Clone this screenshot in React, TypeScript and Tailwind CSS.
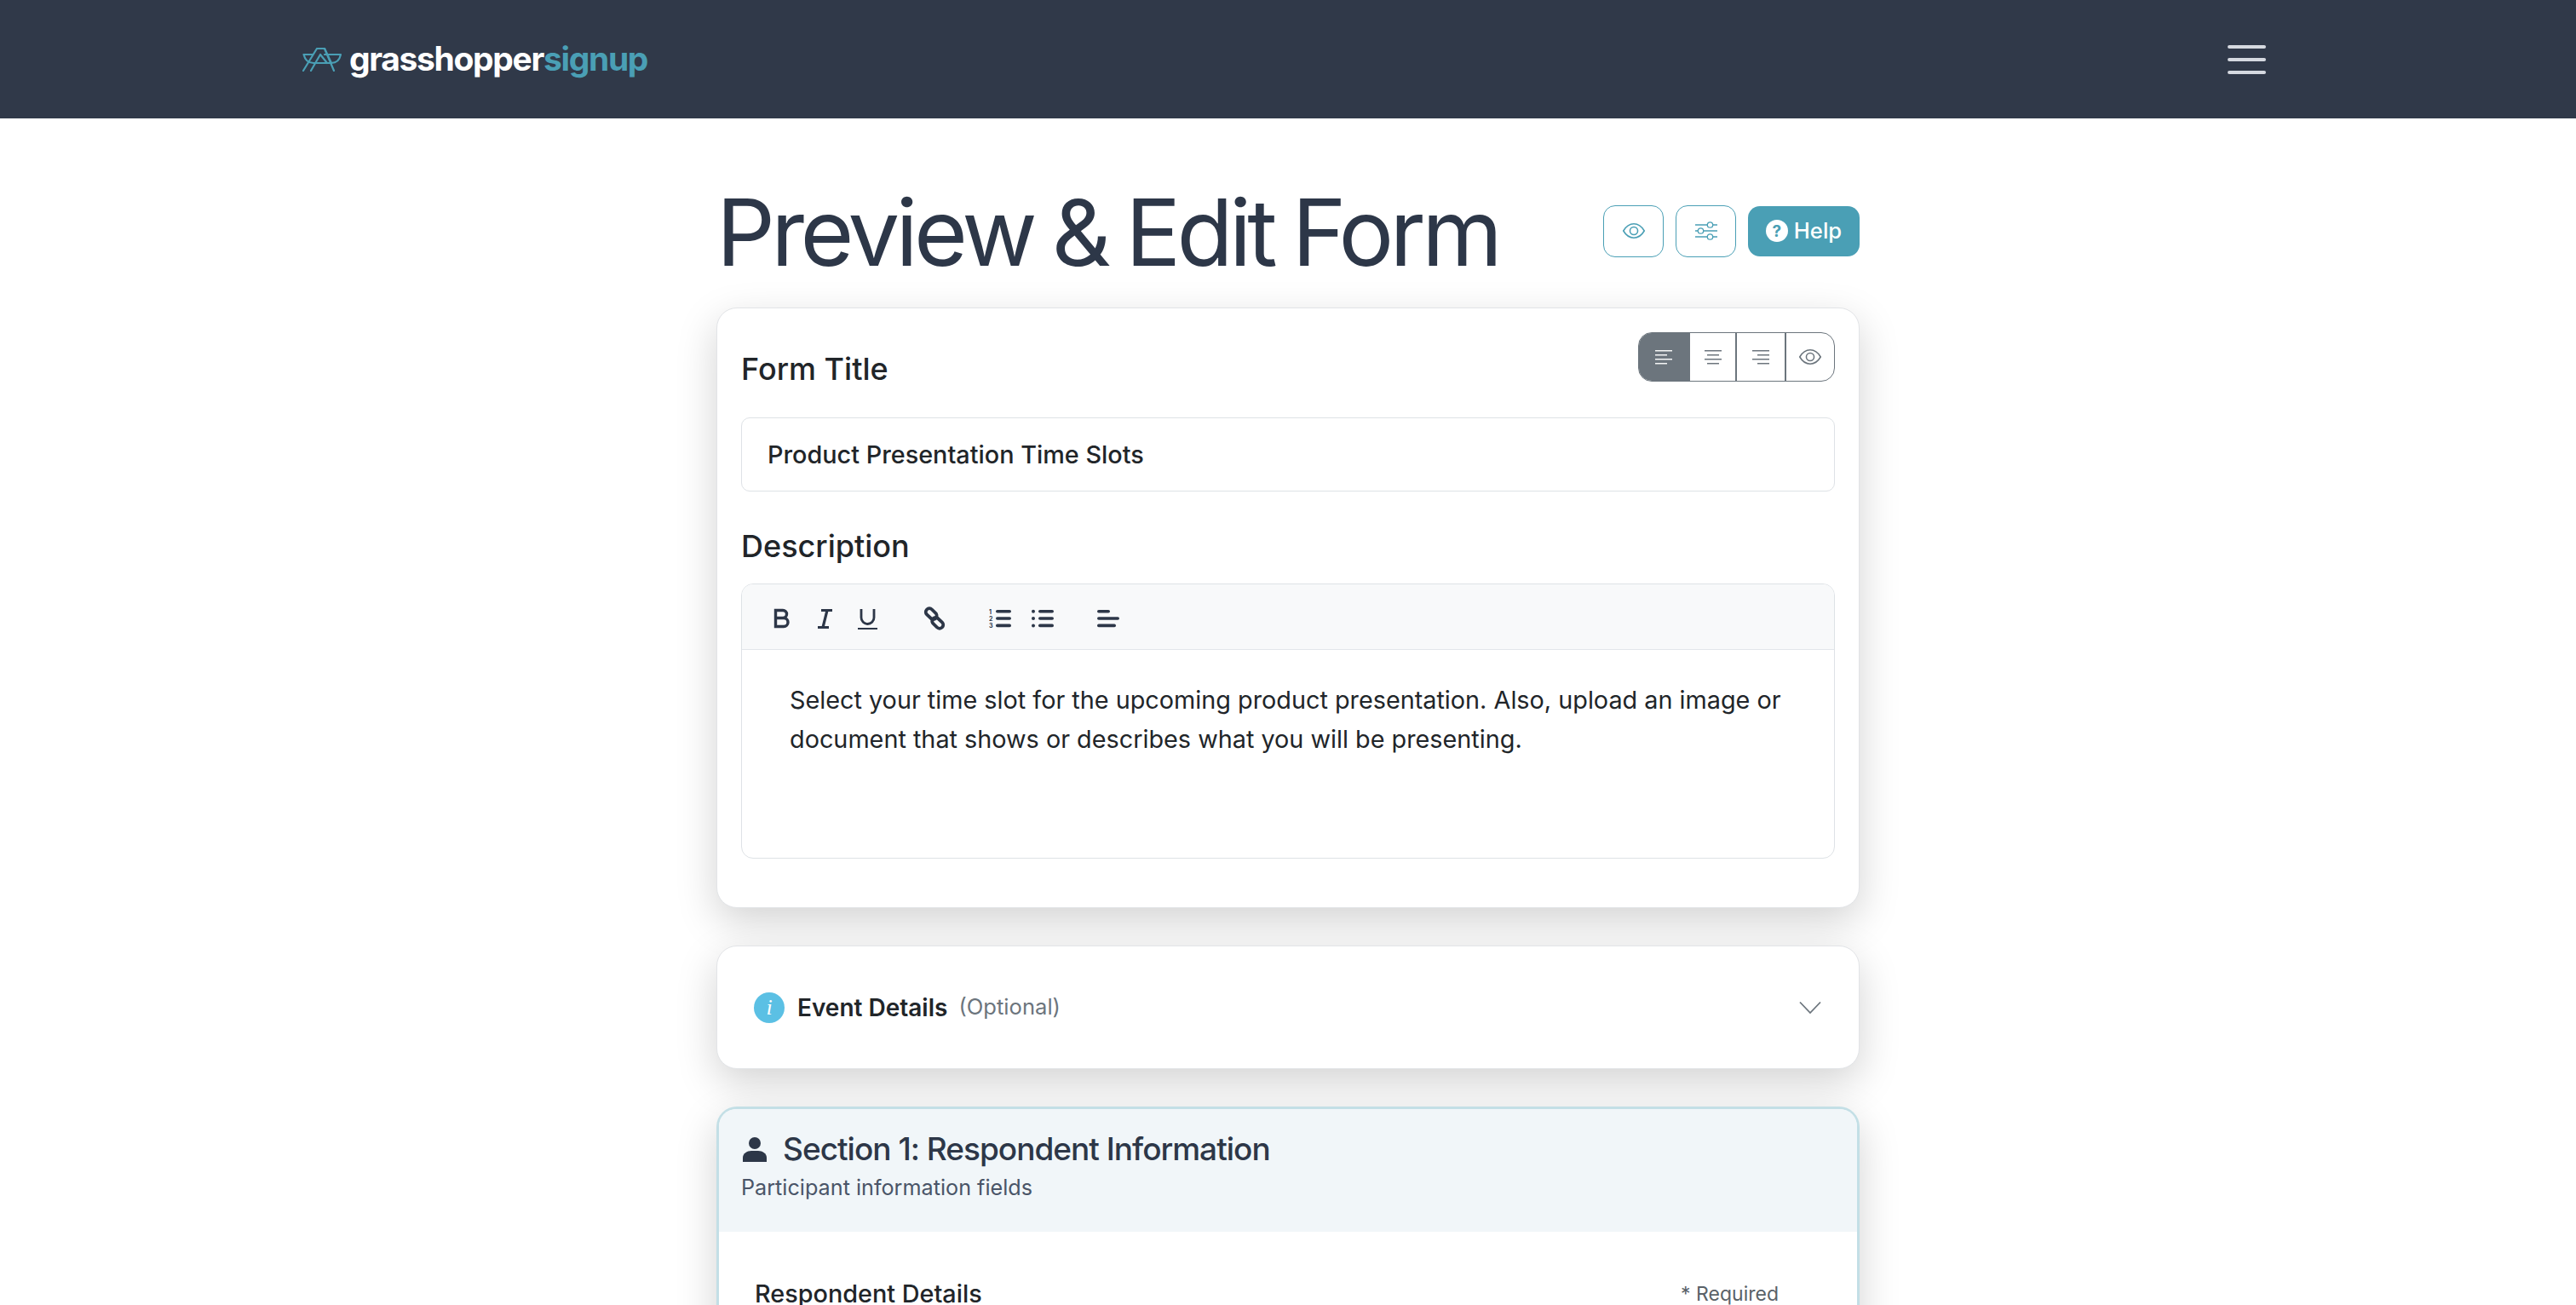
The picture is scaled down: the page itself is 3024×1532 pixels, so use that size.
import React from "react";

const jakarta = "font-['Inter',sans-serif]";

function GrasshopperMark() {
  return (
    <svg width="46" height="28" viewBox="0 0 46 28" fill="none" stroke="#4a9fb5" strokeWidth="2.2" strokeLinecap="round" strokeLinejoin="round">
      <path d="M1 27 L17 1 H26 L37 27" />
      <path d="M1.5 8 H12 M26 8 H45 Q43 18 34 18 H13 Q4 18 1.5 8" />
      <path d="M10 27 L21 8 L29 18" />
      <path d="M26 1 L34 18" />
    </svg>
  );
}

function Eye({ color, size = 24 }: { color: string; size?: number }) {
  return (
    <svg width={size} height={size} viewBox="0 0 16 16" fill="none" stroke={color} strokeWidth="0.9">
      <path d="M1 8 C3 4.6 5.3 3.3 8 3.3 C10.7 3.3 13 4.6 15 8 C13 11.4 10.7 12.7 8 12.7 C5.3 12.7 3 11.4 1 8 Z" />
      <circle cx="8" cy="8" r="2.6" />
    </svg>
  );
}

function AlignLines({ kind, color }: { kind: "left" | "center" | "right"; color: string }) {
  const rows =
    kind === "left"
      ? [[0, 20], [0, 14], [0, 20], [0, 14]]
      : kind === "center"
        ? [[0, 20], [3, 14], [0, 20], [3, 14]]
        : [[0, 20], [6, 14], [0, 20], [6, 14]];
  return (
    <svg width="20" height="18" viewBox="0 0 20 18" fill={color}>
      {rows.map((r, i) => (
        <rect key={i} x={r[0]} y={1 + i * 5} width={r[1]} height="1.5" />
      ))}
    </svg>
  );
}

function Toolbar() {
  const c = "#2d3748";
  return (
    <div className="flex h-[77px] items-center border-b border-[#e3e6ea] bg-[#f8f9fa] pl-[37px] pt-[4px]">
      <svg width="20" height="24" viewBox="0 0 20 24" fill="none" stroke={c} strokeWidth="3.4">
        <path d="M2.5 2.5 H11 A4.5 4.5 0 0 1 11 11.5 H2.5 Z M2.5 11.5 H12 A5 5 0 0 1 12 21.5 H2.5 Z" />
      </svg>
      <svg className="ml-[31px]" width="19" height="23" viewBox="0 0 19 23" fill="none" stroke={c} strokeWidth="3.2">
        <path d="M5 1.5 H18 M1 21.5 H14 M12 1.5 L7 21.5" />
      </svg>
      <svg className="ml-[29px]" width="23" height="25" viewBox="0 0 23 25" fill="none" stroke={c}>
        <path d="M4 1 V11 A7.5 7.5 0 0 0 19 11 V1" strokeWidth="2.8" />
        <path d="M0 24 H23" strokeWidth="1.8" />
      </svg>
      <svg className="ml-[53px]" width="28" height="28" viewBox="0 0 28 28" fill="none" stroke={c} strokeWidth="3.8" strokeLinecap="round">
        <path d="M11 15 L5 9.5 A4.2 4.2 0 0 1 11 3.5 L16 8.5 A4.2 4.2 0 0 1 13 15" />
        <path d="M17 13 L23 18.5 A4.2 4.2 0 0 1 17 24.5 L12 19.5 A4.2 4.2 0 0 1 15 13" />
      </svg>
      <svg className="ml-[50px]" width="26" height="24" viewBox="0 0 26 24" fill={c}>
        <rect x="8" y="2" width="18" height="3.6" rx="1.8" />
        <rect x="8" y="10.2" width="18" height="3.6" rx="1.8" />
        <rect x="8" y="18.6" width="18" height="3.6" rx="1.8" />
        <text x="0" y="6.5" fontSize="7" fontWeight="700" fontFamily="Inter, sans-serif">1</text>
        <text x="0" y="14.5" fontSize="7" fontWeight="700" fontFamily="Inter, sans-serif">2</text>
        <text x="0" y="23" fontSize="7" fontWeight="700" fontFamily="Inter, sans-serif">3</text>
      </svg>
      <svg className="ml-[24px]" width="26" height="24" viewBox="0 0 26 24" fill={c}>
        <rect x="8" y="2" width="18" height="3.6" rx="1.8" />
        <rect x="8" y="10.2" width="18" height="3.6" rx="1.8" />
        <rect x="8" y="18.6" width="18" height="3.6" rx="1.8" />
        <circle cx="2" cy="3.8" r="2" />
        <circle cx="2" cy="12" r="2" />
        <circle cx="2" cy="20.4" r="2" />
      </svg>
      <svg className="ml-[51px]" width="26" height="24" viewBox="0 0 26 24" fill={c}>
        <rect x="0" y="2" width="15" height="3.6" rx="1.8" />
        <rect x="0" y="10.2" width="26" height="3.6" rx="1.8" />
        <rect x="0" y="18.6" width="22" height="3.6" rx="1.8" />
      </svg>
    </div>
  );
}

export default function App() {
  return (
    <div className={`h-[1532px] overflow-hidden bg-white ${jakarta} text-[#212529]`}>
      <nav className="flex h-[139px] items-center justify-between bg-[#303949] pl-[355px] pr-[364px]">
        <div className="flex items-center gap-[9px]">
          <GrasshopperMark />
          <div className="pb-[3px] text-[39px] font-bold leading-none tracking-[-1.35px]">
            <span className="text-white">grasshopper</span>
            <span className="text-[#4a9fb5]">signup</span>
          </div>
        </div>
        <div className="flex w-[45px] flex-col gap-[11px]">
          <div className="h-[4px] rounded-full bg-[#d5d9e0]" />
          <div className="h-[4px] rounded-full bg-[#d5d9e0]" />
          <div className="h-[4px] rounded-full bg-[#d5d9e0]" />
        </div>
      </nav>

      <main className="mx-auto flex w-[1342px] flex-col">
        <div className="flex h-[222px] items-center justify-between pt-[42px]">
          <h1 className="pt-[3px] text-[108px] font-normal leading-none tracking-[-4.7px] text-[#2d3748] [word-spacing:-4px]">
            Preview &amp; Edit Form
          </h1>
          <div className="flex items-center gap-[14px]">
            <button className="flex h-[61px] w-[71px] items-center justify-center rounded-[14px] border border-[#4a9fb5]">
              <Eye color="#4a9fb5" size={28} />
            </button>
            <button className="flex h-[61px] w-[71px] items-center justify-center rounded-[14px] border border-[#4a9fb5]">
              <svg width="28" height="28" viewBox="0 0 28 28" fill="none" stroke="#4a9fb5" strokeWidth="1.3">
                <path d="M1 7 H15 M22 7 H27 M1 14 H4 M11 14 H27 M1 21 H15 M22 21 H27" />
                <circle cx="18.5" cy="7" r="3.2" />
                <circle cx="7.5" cy="14" r="3.2" />
                <circle cx="18.5" cy="21" r="3.2" />
              </svg>
            </button>
            <button className="flex h-[59px] w-[131px] items-center justify-center gap-[7px] rounded-[14px] bg-[#4a9fb5] text-[25.6px] font-medium text-white">
              <span className="flex h-[26px] w-[26px] items-center justify-center rounded-full bg-white text-[19px] font-bold leading-none text-[#4a9fb5]">
                ?
              </span>
              Help
            </button>
          </div>
        </div>

        <section className="h-[705px] rounded-[24px] border border-[#e2e4e7] bg-white px-[28px] pt-[28px] shadow-[0_16px_48px_rgba(0,0,0,0.175)]">
          <div className="flex items-start justify-between">
            <h2 className="pt-[21px] text-[36px] font-medium leading-[44px]">Form Title</h2>
            <div className="flex h-[58px] w-[231px] overflow-hidden rounded-[16px] border border-[#6c757d]">
              <div className="flex w-[58px] items-center justify-center bg-[#6c757d]">
                <AlignLines kind="left" color="#f4f5f6" />
              </div>
              <div className="flex w-[57px] items-center justify-center border-x-2 border-[#6c757d]">
                <AlignLines kind="center" color="#6c757d" />
              </div>
              <div className="flex w-[58px] items-center justify-center border-r-2 border-[#6c757d]">
                <AlignLines kind="right" color="#6c757d" />
              </div>
              <div className="flex flex-1 items-center justify-center">
                <Eye color="#6c757d" size={28} />
              </div>
            </div>
          </div>

          <div className="mt-[35px] flex h-[87px] items-center rounded-[10px] border border-[#dee2e6] px-[30px] text-[28.8px] font-medium">
            Product Presentation Time Slots
          </div>

          <h2 className="mt-[42px] text-[36px] font-medium leading-[44px]">Description</h2>

          <div className="mt-[22px] h-[323px] overflow-hidden rounded-[14px] border border-[#dee2e6]">
            <Toolbar />
            <p className="px-[56px] pt-[36px] text-[28.8px] leading-[46px]">
              Select your time slot for the upcoming product presentation. Also, upload an image or document that
              shows or describes what you will be presenting.
            </p>
          </div>
        </section>

        <section className="mt-[44px] flex h-[145px] items-center justify-between rounded-[24px] border border-[#e2e4e7] bg-white pl-[43px] pr-[44px] shadow-[0_16px_48px_rgba(0,0,0,0.175)]">
          <div className="flex items-center">
            <span className="flex h-[36px] w-[36px] items-center justify-center rounded-full bg-[#5bc0e4] font-['Liberation_Serif',serif] text-[26px] italic text-white">
              i
            </span>
            <span className="ml-[15px] text-[28px] font-semibold">Event Details</span>
            <span className="ml-[13px] text-[25.6px] text-[#6c757d]">(Optional)</span>
          </div>
          <svg width="26" height="16" viewBox="0 0 26 16" fill="none" stroke="#6c757d" strokeWidth="1.8">
            <path d="M1 1.5 L13 14 L25 1.5" />
          </svg>
        </section>

        <section className="mt-[44px] h-[400px] rounded-t-[24px] border-[3px] border-b-0 border-[#c3dfe6] bg-white shadow-[0_16px_48px_rgba(0,0,0,0.175)]">
          <div className="h-[144px] rounded-t-[20px] bg-[#f1f6f9] pl-[26px] pt-[22px]">
            <div className="flex items-center">
              <svg className="ml-[2px]" width="28" height="30" viewBox="0 0 28 30" fill="#2d3748">
                <circle cx="14" cy="8" r="7" />
                <path d="M0 30 V25 C0 20 5 17 10 17 H18 C23 17 28 20 28 25 V30 Z" />
              </svg>
              <h3 className="ml-[19px] text-[37px] font-medium leading-[50px] tracking-[-1px] text-[#2d3748]">
                Section 1: Respondent Information
              </h3>
            </div>
            <p className="mt-[2px] text-[25.2px] leading-[36px] text-[#4a5568]">Participant information fields</p>
          </div>
          <div className="flex items-start justify-between pl-[42px] pr-[92px] pt-[53px]">
            <div className="text-[28.8px] font-medium leading-[40px]">Respondent Details</div>
            <div className="text-[23px] leading-[40px] text-[#5a6268]">* Required</div>
          </div>
        </section>
      </main>
    </div>
  );
}
